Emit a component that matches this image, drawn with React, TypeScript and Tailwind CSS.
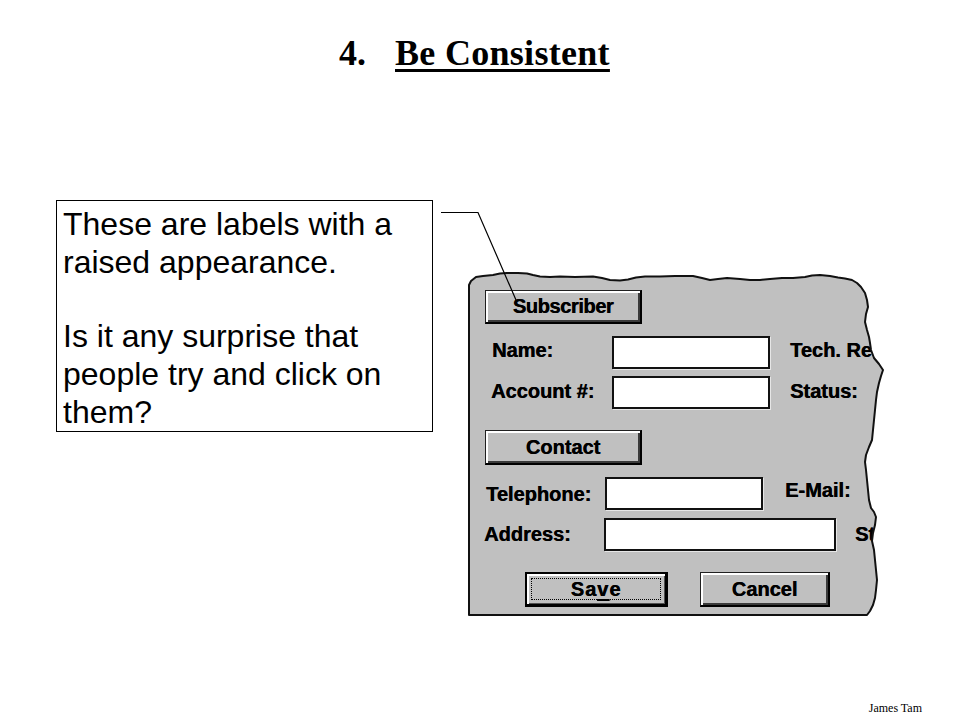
import React from "react";

const edgePts: [number, number][] = [
  [469, 615], [469, 285], [471, 281], [476, 277], [483, 276], [493, 275], [500, 273.5], [507, 273], [518, 273],
  [527, 273.5], [533, 275], [540, 276.5], [550, 277], [560, 276.5], [575, 277], [593, 276.5], [602, 278],
  [610, 280], [620, 280.5], [628, 279.5], [636, 277.5], [645, 276.5], [660, 276.5], [675, 276], [693, 276],
  [702, 278], [710, 280], [718, 279], [727, 278], [740, 279], [750, 280], [760, 280], [770, 279], [782, 278],
  [793, 278], [805, 277], [812, 275.5], [820, 275], [830, 276], [838, 277.5], [845, 278.5], [852, 280],
  [857, 283], [861, 287], [865, 293], [867, 300], [868, 307], [866, 314], [865, 322], [867, 330], [869, 337],
  [870, 343], [871, 350], [874, 358], [879, 364], [883, 370], [881, 376], [879, 383], [877, 392], [876, 400],
  [875, 410], [874, 420], [873, 430], [872, 440], [869, 447], [866, 455], [865, 462], [866, 470], [867, 480],
  [868, 490], [869, 500], [871, 508], [874, 512], [876, 517], [875, 525], [873, 533], [872, 541], [874, 550],
  [875, 560], [876, 570], [877, 580], [876, 590], [875, 598], [873, 605], [870, 611], [867, 615],
];

const outline = edgePts.map((p, i) => `${i === 0 ? "M" : "L"}${p[0]} ${p[1]}`).join(" ") + " Z";
const rightIdx = edgePts.findIndex((p) => p[0] === 857 && p[1] === 283);
const rightEdge = edgePts.slice(rightIdx);
const whiteArea =
  "M857 265 " +
  rightEdge.map((p) => `L${p[0]} ${p[1]}`).join(" ") +
  " L867 625 L900 625 L900 265 Z";

function Raised({ w, h, children, className = "" }: { w: string; h: string; children: React.ReactNode; className?: string }) {
  return (
    <div
      className={`${w} ${h} ${className} flex items-center justify-center bg-[#c0c0c0] border border-[#202020] border-r-[2px] border-b-[2px] border-r-black border-b-black shadow-[inset_2px_2px_0_#ffffff,inset_-2px_-2px_0_#3a3a3a]`}
    >
      {children}
    </div>
  );
}

function Field({ w }: { w: string }) {
  return <div className={`${w} h-[33px] bg-white border-2 border-[#111] shadow-[1px_1px_0_#e6e6e6]`} />;
}

export default function App() {
  return (
    <div className="relative w-[960px] h-[720px] bg-white overflow-hidden flex flex-col text-black">
      <h1 className="pt-[32px] pl-[339px] text-[36px] leading-[42px] font-bold font-['Liberation_Serif','Times_New_Roman',serif]">
        <span>4.</span>
        <span className="ml-[29px] tracking-[0.3px] underline decoration-[3px] underline-offset-[4px]">Be Consistent</span>
      </h1>

      <div className="flex items-start mt-[126px] pl-[56px]">
        <div className="w-[377px] shrink-0 border border-black pt-[4px] pl-[6px] text-[32px] leading-[38px] font-['Liberation_Sans',Arial,sans-serif]">
          <p>These are labels with a raised appearance.</p>
          <p className="mt-[36px]">Is it any surprise that people try and click on them?</p>
        </div>

        <div className="ml-[27px] mt-[65px] relative w-[440px] h-[360px] shrink-0">
          <svg className="absolute inset-0" width="440" height="360" viewBox="460 265 440 360">
            <path d={outline} fill="#c0c0c0" />
          </svg>

          <div className="relative pl-[25px] pt-[25px] font-['Liberation_Sans',Arial,sans-serif] font-bold text-[20px] leading-[23px] whitespace-nowrap [text-shadow:0.4px_0_0_#000]">
            <Raised w="w-[157px]" h="h-[34px]">
              <span className="tracking-[-0.4px]">Subscriber</span>
            </Raised>

            <div className="mt-[12px] flex items-center">
              <span className="w-[127px] pl-[7px] -mt-[4px]">Name:</span>
              <Field w="w-[158px]" />
              <span className="ml-[20px] -mt-[4px]">Tech. Re</span>
            </div>
            <div className="mt-[7px] flex items-center">
              <span className="w-[127px] pl-[6px] -mt-[2px]">Account #:</span>
              <Field w="w-[158px]" />
              <span className="ml-[20px] -mt-[2px]">Status:</span>
            </div>

            <Raised w="w-[157px]" h="h-[35px]" className="mt-[21px]">
              Contact
            </Raised>

            <div className="mt-[12px] flex items-center">
              <span className="w-[120px] pl-[1px] mt-[2px]">Telephone:</span>
              <Field w="w-[158px]" />
              <span className="ml-[22px] -mt-[6px]">E-Mail:</span>
            </div>
            <div className="mt-[8px] flex items-center">
              <span className="w-[120px] -ml-[1px]">Address:</span>
              <Field w="w-[232px]" />
              <span className="ml-[19px]">St</span>
            </div>

            <div className="mt-[21px] pl-[40px] flex gap-[32px]">
              <div className="w-[143px] h-[35px] bg-[#c0c0c0] border-2 border-black border-r-[3px] border-b-[3px] shadow-[inset_2px_2px_0_#ffffff,inset_-1px_-1px_0_#505050] p-[4px]">
                <div className="h-full border border-dotted border-black flex items-center justify-center tracking-[1px]">
                  Sa<span className="underline decoration-2 underline-offset-[3px]">v</span>e
                </div>
              </div>
              <Raised w="w-[130px]" h="h-[35px]">Cancel</Raised>
            </div>
          </div>

          <svg className="absolute inset-0 pointer-events-none" width="440" height="360" viewBox="460 265 440 360">
            <path d={whiteArea} fill="#ffffff" />
            <path d={outline} fill="none" stroke="#111" strokeWidth="2" strokeLinejoin="round" />
          </svg>
        </div>
      </div>

      <div className="mt-auto flex justify-end pr-[38px] pb-[5px]">
        <span className="text-[12px] leading-[14px] font-['Liberation_Serif','Times_New_Roman',serif]">James Tam</span>
      </div>

      <svg className="absolute inset-0 pointer-events-none" width="960" height="720" viewBox="0 0 960 720">
        <polyline points="441,212.5 478,212.5 516,300" fill="none" stroke="#000" strokeWidth="1.2" />
      </svg>
    </div>
  );
}
